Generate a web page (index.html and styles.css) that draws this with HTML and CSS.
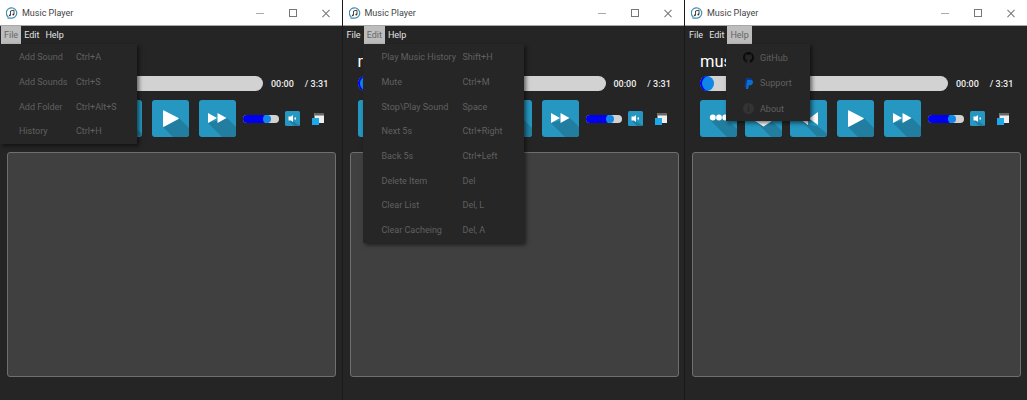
FILE: index.html
```html
<!DOCTYPE html>
<html lang="en">
<head>
  <meta charset="UTF-8" />
  <title>Music Player</title>
  <link rel="stylesheet" href="styles.css">
</head>
<body>
  <svg class="defs" width="0" height="0">
    <symbol id="logo" viewBox="0 0 12 12">
      <path d="M2.400 10.200A5.200 5.200 0 1 1 6 11.200H1.500" fill="none" stroke="#3f8fb0" stroke-width="1.200"/>
      <path d="M4.500 8.300V4l3.500-.8v4.200" fill="none" stroke="#333" stroke-width=".9"/>
      <circle cx="3.800" cy="8.300" r=".9" fill="#333"/>
      <circle cx="7.300" cy="7.500" r=".9" fill="#333"/>
    </symbol>
    <symbol id="btn-dots" viewBox="0 0 37 37">
      <rect width="37" height="37" rx="3" fill="#2597c0"/>
      <path d="M10 20l17-1 10 10v5a3 3 0 0 1-3 3H27z" fill="#217ea0"/>
      <circle cx="12.800" cy="17.500" r="2.900" fill="#fff"/>
      <circle cx="19" cy="17.500" r="2.900" fill="#fff"/>
      <circle cx="25.200" cy="17.500" r="2.900" fill="#fff"/>
    </symbol>
    <symbol id="btn-list" viewBox="0 0 37 37">
      <rect width="37" height="37" rx="3" fill="#2597c0"/>
      <path d="M10 21h17l10 10v3a3 3 0 0 1-3 3H26z" fill="#217ea0"/>
      <path d="M10 15h17v6l-8.500 5.500L10 21z" fill="#fff"/>
    </symbol>
    <symbol id="btn-back" viewBox="0 0 37 37">
      <rect width="37" height="37" rx="3" fill="#2597c0"/>
      <path d="M9 18.500l9 6 10 2 9 7a3 3 0 0 1-3 3H27z" fill="#217ea0"/>
      <path d="M18 12v13l-9-6.500zM28 12v13l-9-6.500z" fill="#fff"/>
    </symbol>
    <symbol id="btn-play" viewBox="0 0 37 37">
      <rect width="37" height="37" rx="3" fill="#2597c0"/>
      <path d="M11 27l16-9 10 10v6a3 3 0 0 1-3 3H21z" fill="#217ea0"/>
      <path d="M12 10.500q-1-.6-1 .6v15q0 1.200 1 .6L26.500 19q.6-.5 0-1z" fill="#fff"/>
    </symbol>
    <symbol id="btn-next" viewBox="0 0 37 37">
      <rect width="37" height="37" rx="3" fill="#2597c0"/>
      <path d="M9 23l19-5 9 9v7a3 3 0 0 1-3 3H23z" fill="#217ea0"/>
      <path d="M9 13v10l9-5zM18.500 13v10l9-5z" fill="#fff"/>
    </symbol>
    <symbol id="btn-mute" viewBox="0 0 15 15">
      <rect width="15" height="15" rx="1.500" fill="#2597c0"/>
      <path d="M3.500 9.500l4.500.5 7 5H9z" fill="#217ea0"/>
      <path d="M3.500 5.500H6l2-1.500v7L6 9.500H3.500zM9.500 6.500h1.500v2H9.500z" fill="#fff"/>
    </symbol>
    <symbol id="mini" viewBox="0 0 12 12">
      <rect x="2.500" y="0" width="9.500" height="10" fill="#eee"/>
      <rect x="2.500" y="0" width="9.500" height="2.500" fill="#666"/>
      <rect x="0" y="5" width="7" height="7" fill="#1fa8e8"/>
    </symbol>
    <symbol id="github" viewBox="0 0 16 16">
      <path d="M8 0C3.580 0 0 3.580 0 8c0 3.540 2.290 6.530 5.470 7.590.4.070.55-.17.55-.38 0-.19-.01-.82-.01-1.490-2.010.37-2.530-.49-2.690-.94-.09-.23-.48-.94-.82-1.130-.28-.15-.68-.52-.01-.53.63-.01 1.080.58 1.230.82.720 1.210 1.870.87 2.330.66.070-.52.280-.87.510-1.070-1.780-.2-3.640-.89-3.640-3.950 0-.87.310-1.590.820-2.150-.08-.2-.36-1.020.08-2.120 0 0 .67-.21 2.200.82.640-.18 1.320-.27 2-.27s1.360.09 2 .27c1.530-1.040 2.200-.82 2.200-.82.440 1.100.160 1.920.08 2.120.51.560.82 1.270.82 2.150 0 3.070-1.870 3.750-3.650 3.950.29.250.54.730.54 1.480 0 1.070-.01 1.930-.01 2.200 0 .21.150.46.550.38A8.010 8.010 0 0 0 16 8c0-4.420-3.580-8-8-8z" fill="#0c0c0c"/>
    </symbol>
    <symbol id="paypal" viewBox="0 0 16 16">
      <path d="M4 0h5.500C12.500 0 14 1.700 13.500 4.200 13 7 11 8.300 8.300 8.300H6.500L5.500 13.500H2z" fill="#0a3a8c"/>
      <path d="M6 3h5.800c2.300.3 3 2 2.600 4-.5 2.600-2.300 3.700-4.600 3.700H8.500L7.600 16H4.300z" fill="#0a6fd0"/>
    </symbol>
    <symbol id="info" viewBox="0 0 16 16">
      <circle cx="8" cy="8" r="8" fill="#333"/>
      <path d="M7 7h2v6H7zM7 3.500h2v2H7z" fill="#262626"/>
    </symbol>
  </svg>

  <div class="desktop">

    <section class="window">
      <header class="titlebar">
        <svg class="logo"><use href="#logo"/></svg>
        <span class="title">Music Player</span>
        <span class="winbtn winbtn-min"></span>
        <span class="winbtn winbtn-max"></span>
        <span class="winbtn winbtn-close"></span>
      </header>
      <nav class="menubar">
        <span class="menubar-item active">File</span>
        <span class="menubar-item">Edit</span>
        <span class="menubar-item">Help</span>
      </nav>
      <main class="player">
        <!-- the open menu covers the whole name here -->
        <div class="song-name"></div>
        <div class="seek-row">
          <div class="seek"><span class="seek-thumb"></span></div>
          <span class="time">00:00</span>
          <span class="time time-total">/ 3:31</span>
        </div>
        <div class="controls">
          <svg class="ctrl"><use href="#btn-dots"/></svg>
          <svg class="ctrl"><use href="#btn-list"/></svg>
          <svg class="ctrl"><use href="#btn-back"/></svg>
          <svg class="ctrl"><use href="#btn-play"/></svg>
          <svg class="ctrl"><use href="#btn-next"/></svg>
          <div class="volume"><span class="volume-fill"></span><span class="volume-thumb"></span></div>
          <svg class="mute"><use href="#btn-mute"/></svg>
          <svg class="mini"><use href="#mini"/></svg>
        </div>
        <div class="list"></div>
      </main>
      <div class="menu menu-file">
        <div class="menu-row"><span>Add Sound</span><span>Ctrl+A</span></div>
        <div class="menu-row"><span>Add Sounds</span><span>Ctrl+S</span></div>
        <div class="menu-row"><span>Add Folder</span><span>Ctrl+Alt+S</span></div>
        <div class="menu-row"><span>History</span><span>Ctrl+H</span></div>
      </div>
    </section>

    <section class="window">
      <header class="titlebar">
        <svg class="logo"><use href="#logo"/></svg>
        <span class="title">Music Player</span>
        <span class="winbtn winbtn-min"></span>
        <span class="winbtn winbtn-max"></span>
        <span class="winbtn winbtn-close"></span>
      </header>
      <nav class="menubar">
        <span class="menubar-item">File</span>
        <span class="menubar-item active">Edit</span>
        <span class="menubar-item">Help</span>
      </nav>
      <main class="player">
        <div class="song-name">m</div>
        <div class="seek-row">
          <div class="seek"><span class="seek-thumb"></span></div>
          <span class="time">00:00</span>
          <span class="time time-total">/ 3:31</span>
        </div>
        <div class="controls">
          <svg class="ctrl"><use href="#btn-dots"/></svg>
          <svg class="ctrl"><use href="#btn-list"/></svg>
          <svg class="ctrl"><use href="#btn-back"/></svg>
          <svg class="ctrl"><use href="#btn-play"/></svg>
          <svg class="ctrl"><use href="#btn-next"/></svg>
          <div class="volume"><span class="volume-fill"></span><span class="volume-thumb"></span></div>
          <svg class="mute"><use href="#btn-mute"/></svg>
          <svg class="mini"><use href="#mini"/></svg>
        </div>
        <div class="list"></div>
      </main>
      <div class="menu menu-edit">
        <div class="menu-row"><span>Play Music History</span><span>Shift+H</span></div>
        <div class="menu-row"><span>Mute</span><span>Ctrl+M</span></div>
        <div class="menu-row"><span>Stop\Play Sound</span><span>Space</span></div>
        <div class="menu-row"><span>Next 5s</span><span>Ctrl+Right</span></div>
        <div class="menu-row"><span>Back 5s</span><span>Ctrl+Left</span></div>
        <div class="menu-row"><span>Delete Item</span><span>Del</span></div>
        <div class="menu-row"><span>Clear List</span><span>Del, L</span></div>
        <div class="menu-row"><span>Clear Cacheing</span><span>Del, A</span></div>
      </div>
    </section>

    <section class="window">
      <header class="titlebar">
        <svg class="logo"><use href="#logo"/></svg>
        <span class="title">Music Player</span>
        <span class="winbtn winbtn-min"></span>
        <span class="winbtn winbtn-max"></span>
        <span class="winbtn winbtn-close"></span>
      </header>
      <nav class="menubar">
        <span class="menubar-item">File</span>
        <span class="menubar-item">Edit</span>
        <span class="menubar-item active">Help</span>
      </nav>
      <main class="player">
        <div class="song-name">mus</div>
        <div class="seek-row">
          <div class="seek"><span class="seek-thumb"></span></div>
          <span class="time">00:00</span>
          <span class="time time-total">/ 3:31</span>
        </div>
        <div class="controls">
          <svg class="ctrl"><use href="#btn-dots"/></svg>
          <svg class="ctrl"><use href="#btn-list"/></svg>
          <svg class="ctrl"><use href="#btn-back"/></svg>
          <svg class="ctrl"><use href="#btn-play"/></svg>
          <svg class="ctrl"><use href="#btn-next"/></svg>
          <div class="volume"><span class="volume-fill"></span><span class="volume-thumb"></span></div>
          <svg class="mute"><use href="#btn-mute"/></svg>
          <svg class="mini"><use href="#mini"/></svg>
        </div>
        <div class="list"></div>
      </main>
      <div class="menu menu-help">
        <div class="menu-row"><svg class="menu-icon"><use href="#github"/></svg><span>GitHub</span></div>
        <div class="menu-row"><svg class="menu-icon"><use href="#paypal"/></svg><span>Support</span></div>
        <div class="menu-row"><svg class="menu-icon"><use href="#info"/></svg><span>About</span></div>
      </div>
    </section>

  </div>
</body>
</html>
```

FILE: styles.css
```css
html, body {
  margin: 0;
  height: 400px;
  overflow: hidden;
  background: #252525;
  font-family: Roboto, sans-serif;
}
.defs {
  position: absolute;
}
.desktop {
  display: flex;
  height: 400px;
}
.window {
  position: relative;
  flex: 0 0 342.500px;
  height: 400px;
  overflow: hidden;
  box-sizing: border-box;
  border-right: 1px solid #1a1a1a;
  background: #252525;
}

/* title bar */
.titlebar {
  display: flex;
  align-items: center;
  height: 25px;
  background: #fff;
  border-bottom: 1px solid #a8a8a8;
}
.logo {
  width: 12px;
  height: 12px;
  margin-left: 6px;
}
.title {
  margin-left: 4px;
  flex: 1;
  font-size: 9px;
  color: #444;
}
.winbtn {
  position: relative;
  width: 8px;
  height: 8px;
  margin-right: 25px;
}
.winbtn-close {
  margin-right: 12px;
}
.winbtn-min::before {
  content: "";
  position: absolute;
  left: 0;
  right: 0;
  top: 4px;
  border-top: 1px solid #aaa;
}
.winbtn-max::before {
  content: "";
  position: absolute;
  inset: 0;
  border: 1px solid #777;
}
.winbtn-close::before,
.winbtn-close::after {
  content: "";
  position: absolute;
  left: -1px;
  right: -1px;
  top: 4px;
  border-top: 1px solid #777;
  transform: rotate(45deg);
}
.winbtn-close::after {
  transform: rotate(-45deg);
}

/* menu bar */
.menubar {
  display: flex;
  height: 18px;
  padding-left: 1px;
}
.menubar-item {
  padding: 0 3px;
  font-size: 9px;
  line-height: 18px;
  color: #e4e4e4;
}
.menubar-item.active {
  background: #bdbdbd;
  color: #666;
}

/* player */
.player {
  padding: 0 7px;
}
.song-name {
  height: 32px;
  padding-left: 8px;
  overflow: hidden;
  font-size: 16.500px;
  line-height: 36px;
  color: #fff;
}
.seek-row {
  display: flex;
  align-items: center;
  height: 15px;
  padding-left: 8px;
}
.seek {
  position: relative;
  width: 248px;
  height: 15px;
  border-radius: 8px;
  background: #d2d2d2;
}
.seek-thumb {
  position: absolute;
  left: 0;
  top: 0;
  width: 14px;
  height: 15px;
  border-radius: 50%;
  background: #0f86e8;
  box-shadow: inset 2px 0 0 #0000f0;
}
.time {
  margin-left: 8px;
  font-size: 9px;
  font-weight: 500;
  color: #eee;
}
.time-total {
  margin-left: 11px;
}
.controls {
  display: flex;
  align-items: center;
  height: 37px;
  margin-top: 9px;
  padding-left: 8px;
}
.ctrl {
  width: 37px;
  height: 37px;
  margin-right: 8px;
  flex: none;
}
.ctrl:nth-child(n+3) {
  margin-right: 10px;
}
.volume {
  position: relative;
  display: flex;
  width: 36px;
  height: 8px;
  margin: 0 6px 0 -3px;
  border-radius: 4px;
  background: #d2d2d2;
  flex: none;
}
.volume-fill {
  width: 24px;
  border-radius: 4px;
  background: #0000f0;
}
.volume-thumb {
  position: absolute;
  left: 20px;
  top: 0;
  width: 8px;
  height: 8px;
  border-radius: 50%;
  background: #0f86e8;
}
.mute {
  width: 15px;
  height: 15px;
  margin-right: 12px;
  flex: none;
}
.mini {
  width: 12px;
  height: 12px;
  flex: none;
}
.list {
  height: 225px;
  margin-top: 15px;
  box-sizing: border-box;
  width: 329px;
  border: 1px solid #6f6f6f;
  border-radius: 3px;
  background: #404040;
}

/* open menus */
.menu {
  position: absolute;
  top: 44px;
  box-sizing: border-box;
  padding-top: 1px;
  background: #262626;
  box-shadow: 2px 2px 4px rgba(0, 0, 0, 0.55);
  font-size: 9px;
  color: #606060;
}
.menu-row {
  display: flex;
  align-items: center;
  height: 24.700px;
}
.menu-file {
  left: 0;
  width: 137px;
}
.menu-file .menu-row span:first-child {
  width: 57px;
  margin-left: 19px;
}
.menu-edit {
  left: 20px;
  width: 161px;
}
.menu-edit .menu-row span:first-child {
  width: 81px;
  margin-left: 19px;
}
.menu-help {
  left: 41px;
  width: 84px;
  height: 77px;
}
.menu-help .menu-row {
  height: 25.500px;
}
.menu-icon {
  width: 11px;
  height: 11px;
  margin: 0 6px 0 17px;
  flex: none;
}
```
